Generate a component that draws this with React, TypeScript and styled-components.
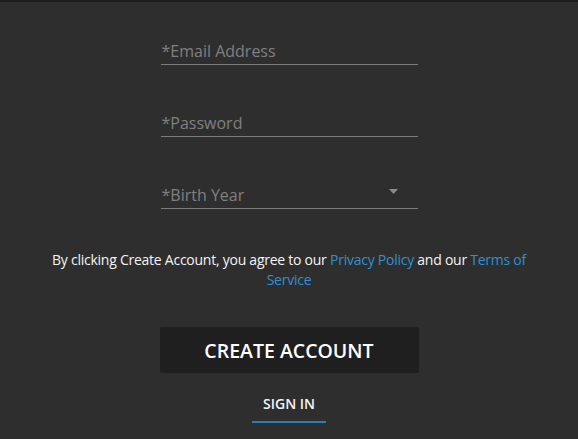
import React from 'react';
import styled, {createGlobalStyle} from 'styled-components';

const GlobalStyle = createGlobalStyle`
    html, body {
        margin: 0;
        padding: 0;
        background: #2e2e2e;
    }
    body {
        font-family: 'Open Sans', 'Liberation Sans', sans-serif;
        -webkit-font-smoothing: antialiased;
    }
`

const Page = styled.div`
    min-height: 439px;
    box-sizing: border-box;
    border-top: 2px solid #1d1d1d;
    background: #2e2e2e;
    display: flex;
    flex-direction: column;
    align-items: center;
`

const Form = styled.form`
    width: 257px;
    padding-top: 33px;
    display: flex;
    flex-direction: column;
    gap: 42px;
`

const Input = styled.input`
    width: 100%;
    height: 30px;
    box-sizing: border-box;
    padding: 2px 1px 0;
    border: none;
    border-bottom: 1px solid #7c7c7c;
    background: transparent;
    outline: none;
    font-family: inherit;
    font-size: 16px;
    color: #e0e0e0;

    &::placeholder {
        color: #808080;
    }
`

const SelectField = styled.div`
    height: 30px;
    box-sizing: border-box;
    padding-top: 2px;
    border-bottom: 1px solid #7c7c7c;
    display: flex;
    align-items: center;
`

const Select = styled.select`
    flex: 1;
    appearance: none;
    border: none;
    background: transparent;
    outline: none;
    padding: 0 1px;
    font-family: inherit;
    font-size: 16px;
    color: #808080;
`

const Caret = styled.svg`
    margin: 0 20px 6px 0;
`

const Disclaimer = styled.p`
    width: 480px;
    margin: 41px 0 0;
    text-align: center;
    font-size: 14px;
    line-height: 20px;
    letter-spacing: -0.25px;
    color: #f4f4f4;
`

const Link = styled.a`
    color: #3190d2;
    text-decoration: none;
`

const CreateButton = styled.button`
    margin-top: 37px;
    width: 259px;
    height: 46px;
    border: none;
    border-radius: 2px;
    background: #1f1f1f;
    color: #fff;
    font-family: inherit;
    font-size: 19.5px;
    font-weight: 600;
    cursor: pointer;
`

const SignIn = styled.a`
    margin-top: 21px;
    padding: 0 11px 7px;
    border-bottom: 2px solid #2a7fb0;
    font-size: 14px;
    font-weight: 600;
    line-height: 20px;
    color: #f4f4f4;
    text-decoration: none;
`

export default function App() {
    return (
        <Page>
            <GlobalStyle/>
            <Form onSubmit={e => e.preventDefault()}>
                <Input type="email" placeholder="*Email Address"/>
                <Input type="password" placeholder="*Password"/>
                <SelectField>
                    <Select defaultValue="">
                        <option value="" disabled>*Birth Year</option>
                    </Select>
                    <Caret width="9" height="5" viewBox="0 0 9 5">
                        <path d="M0 0 H9 L4.5 5 Z" fill="#8a8a8a"/>
                    </Caret>
                </SelectField>
            </Form>
            <Disclaimer>
                By clicking Create Account, you agree to our <Link href="#">Privacy Policy</Link> and our <Link href="#">Terms of Service</Link>
            </Disclaimer>
            <CreateButton type="button">CREATE ACCOUNT</CreateButton>
            <SignIn href="#">SIGN IN</SignIn>
        </Page>
    );
}
